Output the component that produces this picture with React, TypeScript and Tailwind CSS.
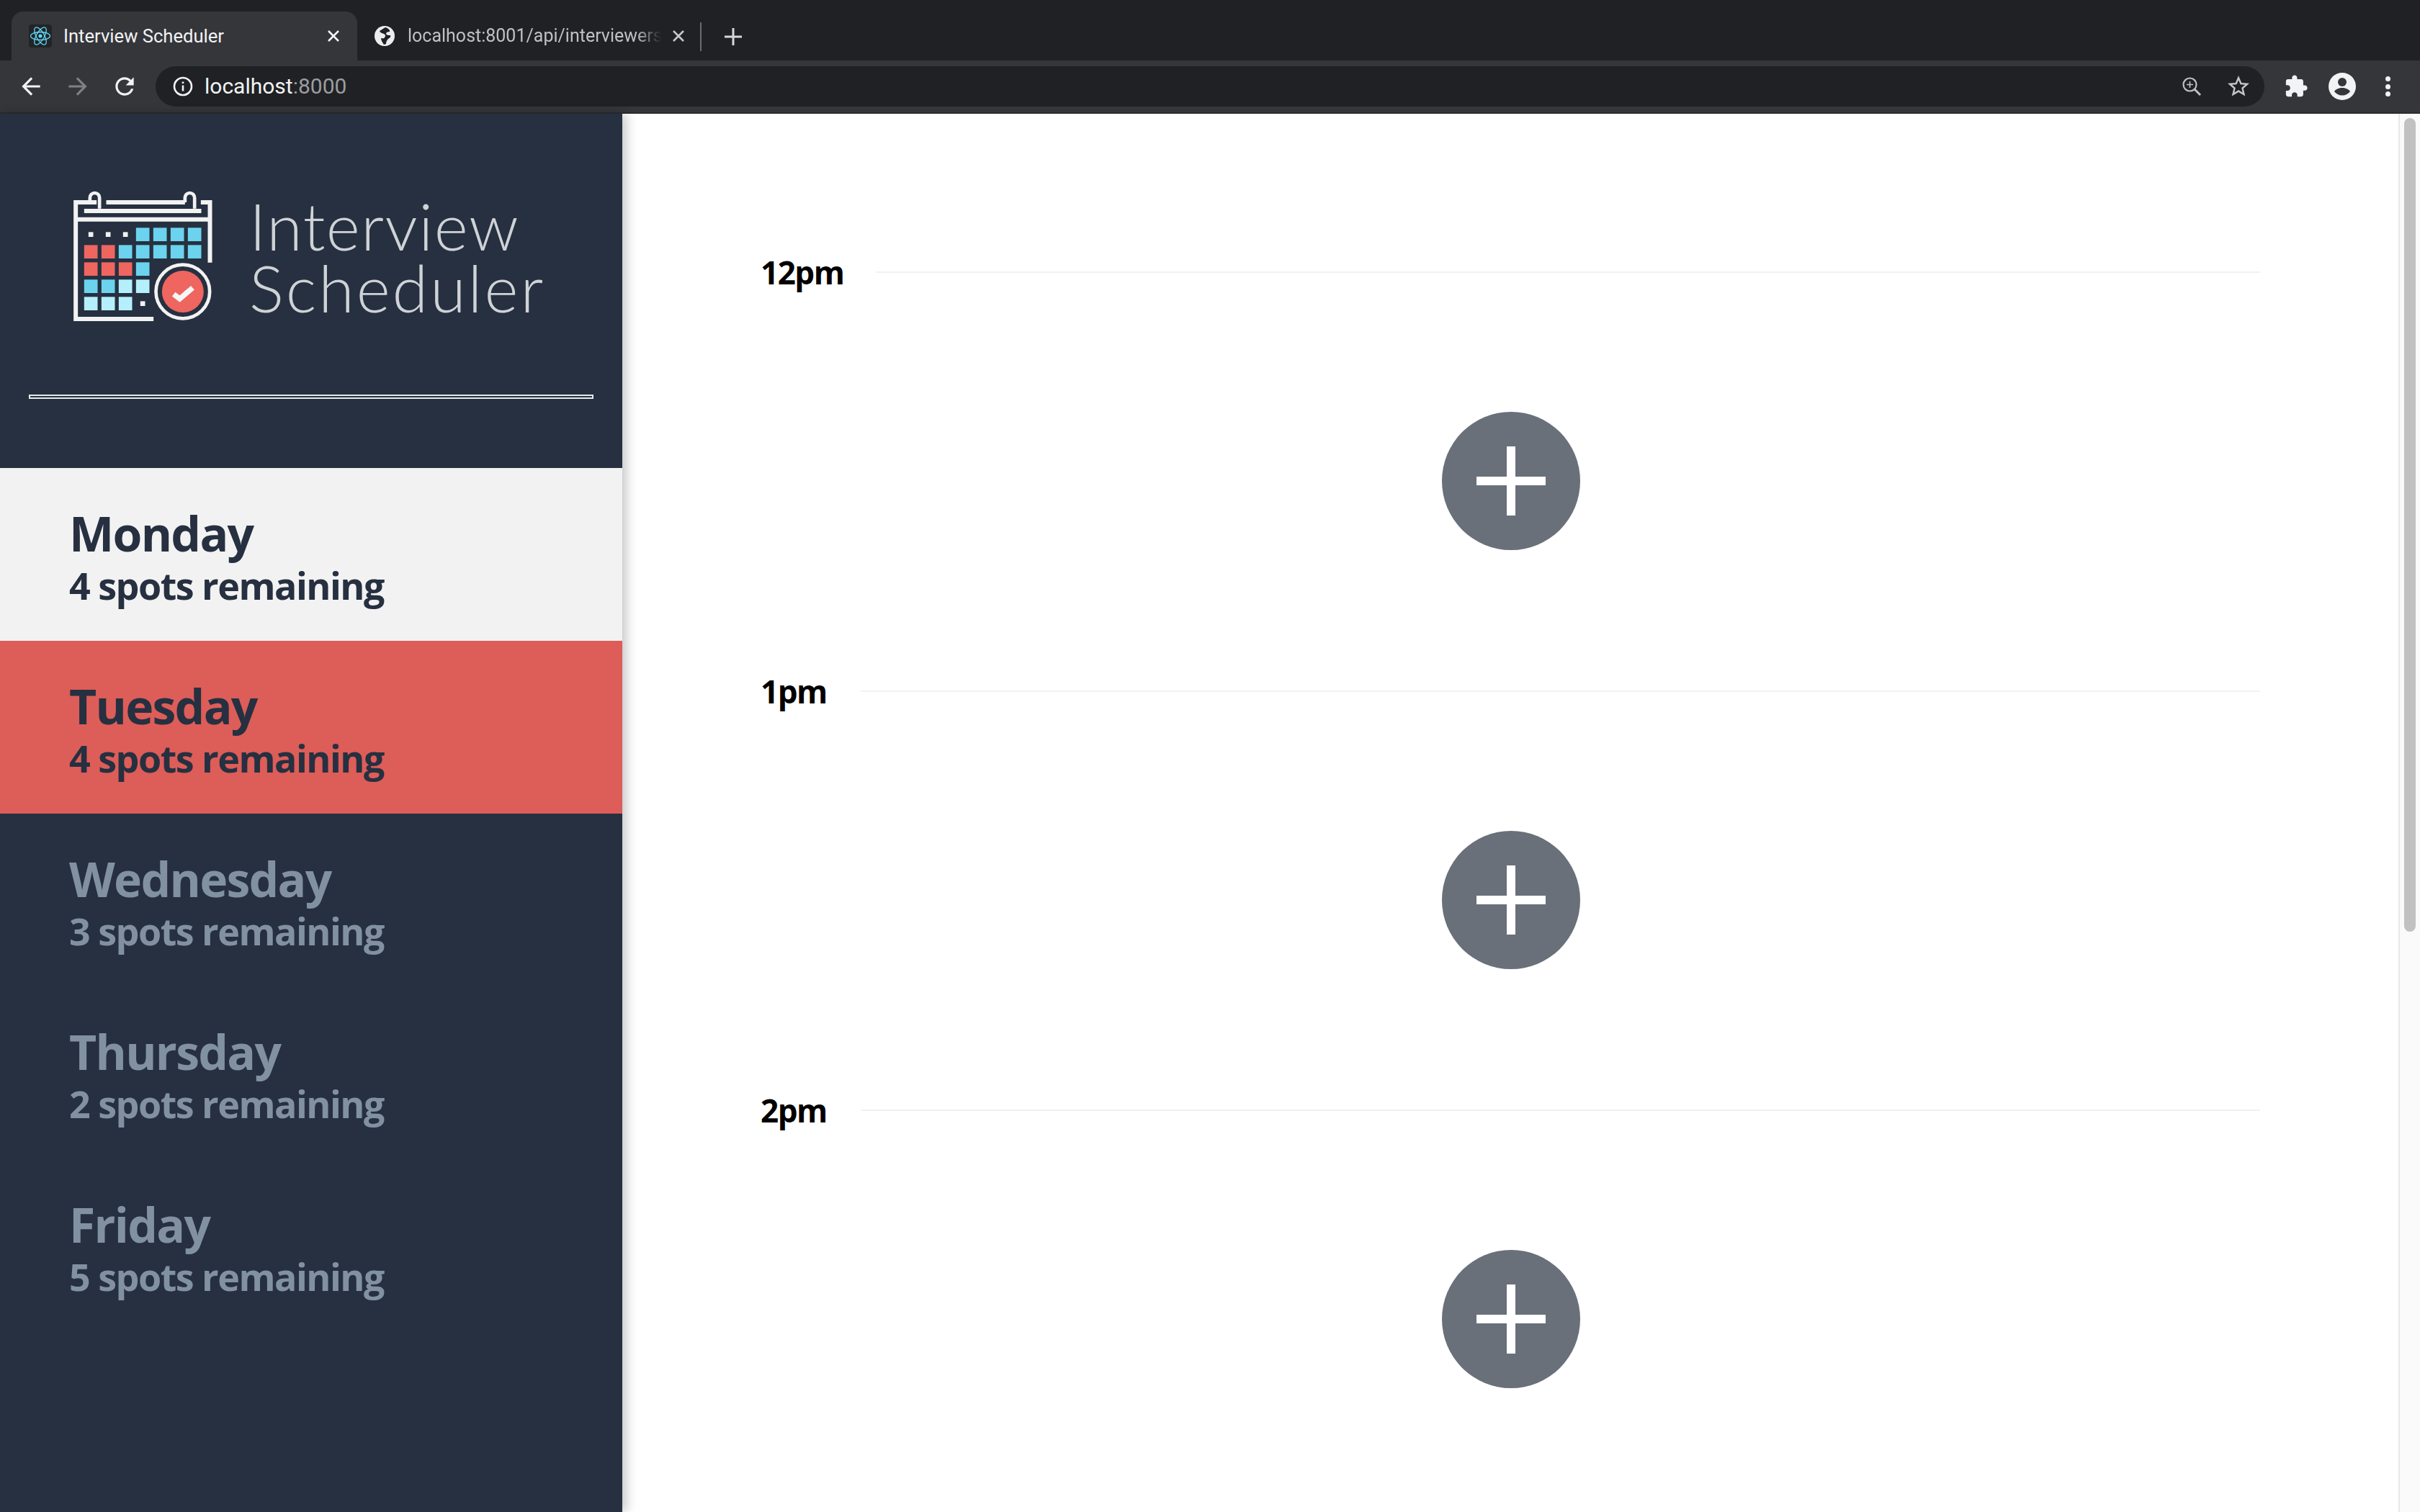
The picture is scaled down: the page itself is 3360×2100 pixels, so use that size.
import React from "react";

const ui = "font-['Roboto','Liberation_Sans',sans-serif]";
const days = [
  { name: "Monday", spots: "4 spots remaining", cls: "bg-[#f2f2f2] text-[#263040]" },
  { name: "Tuesday", spots: "4 spots remaining", cls: "bg-[#dd5d59] text-[#263040]" },
  { name: "Wednesday", spots: "3 spots remaining", cls: "text-[#8291a2]" },
  { name: "Thursday", spots: "2 spots remaining", cls: "text-[#8291a2]" },
  { name: "Friday", spots: "5 spots remaining", cls: "text-[#8291a2]" },
];
const slots = [
  { time: "12pm", gap: "gap-[46px]" },
  { time: "1pm", gap: "gap-[47px]" },
  { time: "2pm", gap: "gap-[47px]" },
];

function Logo() {
  const blue = "#6bd3ee";
  const light = "#b5effc";
  const red = "#ee665f";
  const cell = (x: number, y: number, c: string) => <rect key={`${x}-${y}`} x={x} y={y} width="56" height="56" fill={c} />;
  const col = [170, 242, 314, 386, 458, 530, 602];
  const row = [260, 332, 404, 476, 548];
  const dot = (x: number, y: number) => <rect key={`d${x}-${y}`} x={x} y={y} width="20" height="20" fill="#f2f2f2" />;
  return (
    <svg viewBox="120 100 590 555" className="w-[197px] h-[185px] shrink-0">
      <g fill="none" stroke="#f2f2f2" strokeWidth="18">
        <path d="M459 640H135V154H222M262 154H590M656 154H694V405" />
        <path d="M170 190H658M135 225H694" />
        <path d="M234 180V135a20 20 0 0 0-40 0V154M630 180V135a20 20 0 0 0-40 0V154" strokeWidth="14" />
        <circle cx="581" cy="526" r="112" strokeWidth="14" />
      </g>
      {dot(188, 278)}{dot(260, 278)}{dot(332, 278)}{dot(404, 566)}
      {[3, 4, 5, 6].map((i) => cell(col[i], row[0], blue))}
      {cell(col[0], row[1], red)}{cell(col[1], row[1], red)}
      {[2, 3, 4, 5, 6].map((i) => cell(col[i], row[1], blue))}
      {cell(col[0], row[2], red)}{cell(col[1], row[2], red)}{cell(col[2], row[2], red)}{cell(col[3], row[2], blue)}
      {cell(col[0], row[3], blue)}{cell(col[1], row[3], blue)}{cell(col[2], row[3], light)}{cell(col[3], row[3], light)}
      {cell(col[0], row[4], light)}{cell(col[1], row[4], light)}{cell(col[2], row[4], light)}
      <circle cx="581" cy="526" r="87" fill={red} />
      <path d="M543 537L568 556L622 510" fill="none" stroke="#f6f6f6" strokeWidth="22" />
    </svg>
  );
}

function TopBar() {
  return (
    <header className={`${ui} shrink-0`}>
      <div className="h-[84px] bg-[#202124] flex items-end pl-[16px]">
        <div className="w-[480px] h-[68px] bg-[#35363a] rounded-t-[16px] flex items-center pl-[24px] pr-[24px]">
          <div className="w-[32px] h-[32px] rounded-[4px] bg-[#222426] flex items-center justify-center">
            <svg viewBox="0 0 32 32" className="w-[32px] h-[32px]" fill="none" stroke="#61dafb" strokeWidth="1.3">
              <ellipse cx="16" cy="16" rx="13.5" ry="5.5" />
              <ellipse cx="16" cy="16" rx="13.5" ry="5.5" transform="rotate(60 16 16)" />
              <ellipse cx="16" cy="16" rx="13.5" ry="5.5" transform="rotate(120 16 16)" />
              <circle cx="16" cy="16" r="2.5" fill="#61dafb" stroke="none" />
            </svg>
          </div>
          <span className="ml-[16px] text-[25.6px] leading-[32px] text-[#f1f3f4] whitespace-nowrap">Interview Scheduler</span>
          <svg viewBox="0 0 18 18" className="ml-auto w-[18px] h-[18px]" stroke="#f1f3f4" strokeWidth="2.6"><path d="M2 2L16 16M16 2L2 16" /></svg>
        </div>
        <div className="h-[68px] w-[476px] flex items-center pl-[24px]">
          <svg viewBox="0 0 28 28" className="w-[28px] h-[28px] shrink-0">
            <circle cx="14" cy="14" r="14" fill="#eceded" />
            <path d="M15 2C12 4 10 5 7 7c1 3 4 3 6 4s3 3 1 5c-1 2-3 1-5 1 0 3 2 6 4 9l3-1c0-3 1-5 3-7 2-1 4-3 3-5-3 0-5 0-6-2 0-2 2-3 5-3 1-2-2-5-6-6z" fill="#202124" />
          </svg>
          <div className="ml-[18px] w-[352px] h-[32px] overflow-hidden text-[25px] leading-[32px] text-[#bdc1c6] [mask-image:linear-gradient(to_right,black_90%,transparent_100%)]">
            <span className="block w-[420px]">localhost:8001/api/interviewers</span>
          </div>
          <svg viewBox="0 0 18 18" className="ml-[15px] w-[18px] h-[18px] shrink-0" stroke="#c4c7c9" strokeWidth="2.6"><path d="M2 2L16 16M16 2L2 16" /></svg>
        </div>
        <div className="h-[40px] w-[2px] bg-[#6a6c70] mb-[13px]" />
        <svg viewBox="0 0 28 28" className="ml-[30px] mb-[19px] w-[28px] h-[28px]" stroke="#d5d7d9" strokeWidth="3"><path d="M14 2V26M2 14H26" /></svg>
      </div>
      <div className="h-[72px] bg-[#35363a] flex items-center">
        <svg viewBox="0 0 24 24" className="ml-[24px] w-[38px] h-[38px] shrink-0" fill="#f1f3f4"><path d="M20 11H7.83l5.59-5.59L12 4l-8 8 8 8 1.41-1.41L7.83 13H20v-2z" /></svg>
        <svg viewBox="0 0 24 24" className="ml-[27px] w-[38px] h-[38px] shrink-0" fill="#7f8184"><path d="M4 11h12.17l-5.59-5.59L12 4l8 8-8 8-1.41-1.41L16.17 13H4v-2z" /></svg>
        <svg viewBox="0 0 24 24" className="ml-[27px] w-[38px] h-[38px] shrink-0" fill="#f1f3f4"><path d="M17.65 6.35C16.2 4.9 14.21 4 12 4c-4.42 0-7.99 3.58-7.99 8s3.57 8 7.99 8c3.73 0 6.84-2.55 7.73-6h-2.08c-.82 2.33-3.04 4-5.65 4-3.31 0-6-2.69-6-6s2.69-6 6-6c1.66 0 3.14.69 4.22 1.78L13 11h7V4l-2.35 2.35z" /></svg>
        <div className="ml-[24px] w-[2928px] shrink-0 h-[56px] rounded-[28px] bg-[#202124] flex items-center pl-[24px] pr-[18px]">
          <svg viewBox="0 0 28 28" className="w-[28px] h-[28px]" fill="none" stroke="#f1f3f4">
            <circle cx="14" cy="14" r="12" strokeWidth="2.6" />
            <path d="M14 12.5V20.5M14 7.5V10" strokeWidth="2.6" />
          </svg>
          <span className="ml-[16px] text-[30px] leading-[40px] text-[#f1f3f4]">localhost<span className="text-[#9a9da1]">:8000</span></span>
          <svg viewBox="0 0 28 28" className="ml-auto w-[28px] h-[28px]" fill="none" stroke="#bfc1c3" strokeWidth="2.2">
            <circle cx="11.5" cy="11.5" r="9" />
            <path d="M18 18L26 26" strokeWidth="3" />
            <path d="M11.5 7V16M7 11.5H16" strokeWidth="1.6" />
          </svg>
          <svg viewBox="0 0 24 24" className="ml-[33px] w-[36px] h-[36px]" fill="#c4c6c8"><path d="M22 9.24l-7.19-.62L12 2 9.19 8.63 2 9.24l5.46 4.73L5.82 21 12 17.27 18.18 21l-1.63-7.03L22 9.24zM12 15.4l-3.76 2.27 1-4.28-3.32-2.88 4.38-.38L12 6.1l1.71 4.04 4.38.38-3.32 2.88 1 4.28L12 15.4z" /></svg>
        </div>
        <svg viewBox="0 0 24 24" className="ml-[27px] w-[34px] h-[34px] shrink-0" fill="#f1f3f4"><path d="M20.5 11H19V7c0-1.1-.9-2-2-2h-4V3.5C13 2.12 11.88 1 10.5 1S8 2.12 8 3.5V5H4c-1.1 0-1.99.9-1.99 2v3.8H3.5c1.49 0 2.7 1.21 2.7 2.7s-1.21 2.7-2.7 2.7H2V20c0 1.1.9 2 2 2h3.8v-1.5c0-1.49 1.21-2.7 2.7-2.7 1.49 0 2.7 1.21 2.7 2.7V22H17c1.1 0 2-.9 2-2v-4h1.5c1.38 0 2.5-1.12 2.5-2.5S21.88 11 20.5 11z" /></svg>
        <svg viewBox="0 0 38 38" className="ml-[28px] w-[38px] h-[38px] shrink-0">
          <circle cx="19" cy="19" r="19" fill="#f1f3f4" />
          <circle cx="19" cy="13" r="6" fill="#35363a" />
          <path d="M8 26c2-3.5 7-5 11-5s9 1.500 11 5c-2.500 3.500-6.500 5.500-11 5.500S10.500 29.500 8 26z" fill="#35363a" />
        </svg>
        <div className="ml-[41px] flex flex-col gap-[3.500px] shrink-0">
          <div className="w-[7px] h-[7px] rounded-full bg-[#f1f3f4]" />
          <div className="w-[7px] h-[7px] rounded-full bg-[#f1f3f4]" />
          <div className="w-[7px] h-[7px] rounded-full bg-[#f1f3f4]" />
        </div>
      </div>
      <div className="h-[2px] bg-[#2a2b2e]" />
    </header>
  );
}

export default function App() {
  return (
    <div className="w-[3360px] h-[2100px] overflow-hidden flex flex-col bg-white font-['Open_Sans','Liberation_Sans',sans-serif]">
      <TopBar />
      <div className="flex-1 flex min-h-0">
        <aside className="relative z-10 w-[864px] shrink-0 bg-[#263040] shadow-[6px_0_14px_rgba(0,0,0,0.22)]">
          <div className="h-[492px] flex flex-col">
            <div className="flex items-center pl-[100px] pt-[105px]">
              <Logo />
              <h1 className="ml-[49px] text-[90px] leading-[86px] font-light text-[#cfd2d6] font-['Lato',sans-serif] tracking-[1.5px]">Interview<br /><span className="tracking-[3px]">Scheduler</span></h1>
            </div>
            <div className="mx-[40px] mt-[100px] h-[6px] border-2 border-[#e8e9ea]" />
          </div>
          <nav>
            {days.map((d) => (
              <div key={d.name} className={`h-[240px] px-[96px] pt-[49px] ${d.cls}`}>
                <h2 className="text-[66px] leading-[82px] font-bold tracking-[-1.7px]">{d.name}</h2>
                <h3 className="text-[52px] leading-[64px] font-bold tracking-[-1.5px]">{d.spots}</h3>
              </div>
            ))}
          </nav>
        </aside>
        <main className="flex-1 px-[192px] pt-[196px]">
          {slots.map((s) => (
            <article key={s.time} className="h-[582px]">
              <header className={`flex items-center h-[48px] ${s.gap}`}>
                <span className="text-[44px] leading-[48px] font-bold text-black tracking-[-1.5px]">{s.time}</span>
                <div className="flex-1 h-[2px] bg-[#f1f1f1]" />
              </header>
              <div className="flex justify-center pt-[170px] pl-[2px]">
                <div className="w-[192px] h-[192px] rounded-full bg-[#69707a] flex items-center justify-center">
                  <svg viewBox="0 0 96 96" className="w-[96px] h-[96px]" stroke="#ffffff" strokeWidth="12">
                    <path d="M48 0V96M0 48H96" />
                  </svg>
                </div>
              </div>
            </article>
          ))}
        </main>
        <div className="w-[30px] shrink-0 bg-[#fafafa] border-l-2 border-[#e8e8e8] pl-[6px] pt-[6px]">
          <div className="w-[16px] h-[1130px] rounded-full bg-[#c1c1c1]" />
        </div>
      </div>
    </div>
  );
}
